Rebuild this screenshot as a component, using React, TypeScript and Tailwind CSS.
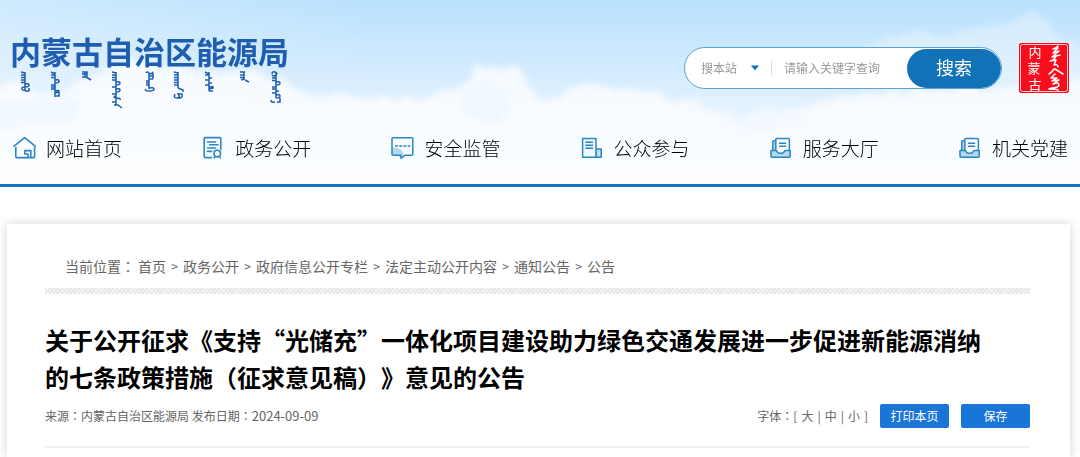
import type { ReactNode } from "react";

interface NavItem {
  label: string;
  icon: ReactNode;
}

const HomeIcon = () => (
  <svg viewBox="0 0 24 24" className="size-6 shrink-0" fill="none" stroke="#2a86c4" strokeWidth="1.6" strokeLinejoin="round" strokeLinecap="round">
    <path d="M2 10.200 12.700 1.600 23.200 10.200" />
    <path d="M3.800 11.500v9.200q0 .9.9.9h17q.9 0 .9-.9v-9.200" />
    <path d="M12.800 18v-3.400h6V21M16 21.200v-3.200h-3.200" />
  </svg>
);

const DocumentIcon = () => (
  <svg viewBox="0 0 24 24" className="size-6 shrink-0" fill="none" stroke="#2a86c4" strokeWidth="1.6" strokeLinecap="round">
    <path d="M10.500 21.600H4.200a1 1 0 0 1-1-1V2.600a1 1 0 0 1 1-1h14.600a1 1 0 0 1 1 1v11" />
    <path d="M6.400 6h8.200M8.600 8.800H17M6.400 12h8.200M6.400 15.400h4.200" />
    <circle cx="16.200" cy="17.600" r="3.300" />
    <path d="m13.800 21-.6.8M18.600 21l.6.8" />
  </svg>
);

const MessageIcon = () => (
  <svg viewBox="0 0 24 24" className="size-6 shrink-0" fill="none" stroke="#2a86c4" strokeWidth="1.5" strokeLinejoin="round">
    <path d="M2 11.500c6 0 10 2 12 6.500l-4 4-2-3H2Z" fill="#b5d8f0" stroke="none" />
    <path d="M3 1.800h18.800a1 1 0 0 1 1 1v15.400a1 1 0 0 1-1 1H15L11 22.400v-3.200H3a1 1 0 0 1-1-1V2.800a1 1 0 0 1 1-1Z" />
    <path d="M5 10H20.400" strokeDasharray="3 1.200" />
  </svg>
);

const PaperIcon = () => (
  <svg viewBox="0 0 24 24" className="size-6 shrink-0" fill="none" stroke="#2a86c4" strokeWidth="1.5" strokeLinejoin="round">
    <path d="M16 13h5.200v8.200H16Z" fill="#c6e1f4" />
    <path d="M2.600 2.600H16v18.600H2.600Z" fill="#eef7fd" />
    <path d="M5.400 6.200h7.600M5.400 9.200h7.600M5.400 12.200h7.600" />
  </svg>
);

const TrayIcon = () => (
  <svg viewBox="0 0 24 24" className="size-6 shrink-0" fill="none" stroke="#2a86c4" strokeWidth="1.5" strokeLinejoin="round">
    <path d="M4 14V6.200a1 1 0 0 1 1-1h1.600v9Z" fill="#b5d8f0" stroke="none" />
    <path d="M2 14.500h4.800c1 0 1.500 2.800 4 2.800h1.600c2.500 0 3-2.800 4-2.800h4.800v5.700a1 1 0 0 1-1 1H3a1 1 0 0 1-1-1Z" fill="#b5d8f0" />
    <path d="M6.800 14.500V3.600a1 1 0 0 1 1-1h11.600a1 1 0 0 1 1 1v10.900" />
    <path d="M6.400 4.800H4.800a1 1 0 0 0-1 1v8.700" />
    <path d="M10 7.200h7.200M10 10.200h7.200" />
  </svg>
);

const navItems: NavItem[] = [
  { label: "网站首页", icon: <HomeIcon /> },
  { label: "政务公开", icon: <DocumentIcon /> },
  { label: "安全监管", icon: <MessageIcon /> },
  { label: "公众参与", icon: <PaperIcon /> },
  { label: "服务大厅", icon: <TrayIcon /> },
  { label: "机关党建", icon: <TrayIcon /> },
];

const crumbs = ["首页", "政务公开", "政府信息公开专栏", "法定主动公开内容", "通知公告", "公告"];

const fontSizes = ["大", "中", "小"];

const Sky = () => (
  <svg className="absolute inset-0 size-full" viewBox="0 0 1080 184" preserveAspectRatio="none" aria-hidden="true">
    <defs>
      <linearGradient id="sky" x1="0" y1="0" x2="0" y2="1">
        <stop offset="0" stopColor="#b9e1fd" />
        <stop offset="0.45" stopColor="#d8edfe" />
        <stop offset="0.8" stopColor="#f6fbff" />
        <stop offset="1" stopColor="#ffffff" />
      </linearGradient>
      <linearGradient id="glow" x1="0" y1="0" x2="1" y2="0">
        <stop offset="0" stopColor="#ffffff" stopOpacity="0.3" />
        <stop offset="0.35" stopColor="#ffffff" stopOpacity="0" />
      </linearGradient>
      <filter id="cloud" x="-10%" y="-30%" width="120%" height="160%">
        <feTurbulence type="fractalNoise" baseFrequency="0.045" numOctaves="4" seed="7" />
        <feDisplacementMap in="SourceGraphic" scale="22" xChannelSelector="R" yChannelSelector="G" />
        <feGaussianBlur stdDeviation="3" />
      </filter>
    </defs>
    <rect width="1080" height="184" fill="url(#sky)" />
    <rect width="1080" height="184" fill="url(#glow)" />
    <g filter="url(#cloud)" fill="#fafdff">
      <path
        d="M-20 92 20 82 60 96 90 76 130 58 160 66 210 70 250 74 290 84 330 98 380 96 420 102 450 88 468 80 478 68 512 66 526 86 546 98 580 86 600 84 650 94 700 108 740 118 800 108 850 98 900 92 1100 80V200H-20Z"
        opacity="0.85"
      />
      <path d="M860 50 900 32 940 34 990 30 1030 12 1050 22 1064 40 1100 50 1100 80 900 80Z" opacity="0.35" />
    </g>
    <g filter="url(#cloud)" fill="#eaf5ff">
      <ellipse cx="485" cy="105" rx="24" ry="20" opacity="0.5" />
      <ellipse cx="30" cy="112" rx="50" ry="14" opacity="0.5" />
      <ellipse cx="760" cy="120" rx="45" ry="12" opacity="0.4" />
    </g>
  </svg>
);

// Vertical script under the bureau name, one column for each word.
const scriptColumns = [
  { x: 21, d: "M0 1l4 1M4 1v19M4 4H0M4 6.500H0M4 9H0M4 11.500H0M4 13q4-1 4 1t-4 2M4 16q-4 0-3 2t3 1M4 20h4v-3" },
  { x: 50, d: "M1 1l4 2M5 1v23M5 4H1M5 6.500H1M5 9q4-1 4 1t-4 2M5 14H1M5 16H1M5 18H1M5 20q4-1 4 0t-4 2M4 25h5v-4" },
  { x: 82, d: "M0 1h5v5M3 1v5M0 3h5M0 6h4M4 6l5 3" },
  { x: 112, d: "M0 1l4 1M4 1v33M4 4H0M4 6.500H0M4 9H0M4 11q4-1 4 1t-4 2M4 16H0M4 18q4-1 4 1t-4 2M4 23H0M4 25q-4 1 0 2M4 27q5 0 4 2M4 31H0M2 34h4l4 3" },
  { x: 146, d: "M0 2q1-2 3 0t4-1M3 2v16M7 2v6M3 5h4M3 8h4M3 10H0M3 12H0M3 14H0M3 17q5-1 5 1t-5 2-3-2" },
  { x: 174, d: "M0 1l4 1M4 1v16M4 4H0M4 6.500H0M4 9H0M4 11.500H0M4 14H0M4 17l5 2v2M1 23q-2 4 2 4t1-4h4q1 4-3 4" },
  { x: 205, d: "M0 1l4 2M4 1v19M4 4H0M4 7h3M4 9H0M4 12h3M4 14H0M4 16q5-1 4 1l-4 1M4 20h4" },
  { x: 240, d: "M0 1h5M4 1v8M4 4H0M4 6.500H0M4 8l-3 1M5 9l4 2" },
  { x: 271, d: "M1 3q0-3 3-2t1 3-4 0M5 2v25M5 7H1M5 9.500H1M5 11q4-1 4 1t-4 2M5 16H1M5 18H1M5 20h3M5 22H1M5 24q4-1 4 1t-4 2M9 27v4H6M0 29q0 3 4 2" },
];

const MongolianScript = () => (
  <svg viewBox="10 0 280 40" className="mt-1 h-10 w-[280px]" fill="none" stroke="#1f5db0" strokeWidth="1.5" role="img" aria-label="内蒙古自治区能源局">
    {scriptColumns.map((column) => (
      <path key={column.x} d={column.d} transform={`translate(${column.x})`} />
    ))}
  </svg>
);

const Seal = () => (
  <svg viewBox="0 0 52 52" className="size-[52px] shrink-0" role="img" aria-label="内蒙古">
    <rect x="1" y="1" width="50" height="50" rx="2" fill="#f90d1d" />
    <rect x="2.500" y="2.500" width="47" height="47" rx="2" fill="none" stroke="#ffc9ce" strokeWidth="1" />
    <g fill="#ffffff" fontSize="13" fontFamily="'Noto Sans CJK SC', sans-serif" textAnchor="middle">
      <text x="17" y="15">内</text>
      <text x="16" y="31">蒙</text>
      <text x="17" y="47">古</text>
    </g>
    <g fill="none" stroke="#ffffff" strokeWidth="1.500" strokeLinecap="round" strokeLinejoin="round">
      <path d="M40 4c-2 2-3 2-5 3l5-1-5 5 6-2-7 6 8-2" />
      <path d="M38 14c-1 3-4 5-6 5l6-1-2 5c2-1 4 0 4 2" />
      <path d="M36 27c-2 3-3 4-5 5M37 27l8 5M37 32l-4 4h6l-5 3 7-1-6 4c4-2 6-1 6 1s-4 3-7 3l-3 1c4 0 7 0 9 1" />
    </g>
  </svg>
);

const SearchBar = () => (
  <form
    className="flex h-[42px] w-[318px] items-stretch overflow-hidden rounded-full border border-[#5ba3d6] bg-white pl-4"
    onSubmit={(event) => event.preventDefault()}
  >
    <div className="relative flex items-center">
      <select aria-label="搜索范围" className="w-[62px] appearance-none bg-transparent text-xs text-[#999999] outline-none">
        <option>搜本站</option>
      </select>
      <svg viewBox="0 0 8 6" className="pointer-events-none absolute right-1 h-[6px] w-2" aria-hidden="true">
        <path d="M0 0.500h8L4 5.500Z" fill="#1673b9" />
      </svg>
    </div>
    <span className="ml-2 h-[14px] w-px self-center bg-[#d8d8d8]" />
    <input
      type="text"
      aria-label="搜索关键字"
      placeholder="请输入关键字查询"
      className="ml-3 min-w-0 flex-1 bg-transparent text-xs text-[#666666] outline-none placeholder:text-[#999999]"
    />
    <button type="submit" className="mt-px w-[94px] rounded-full bg-[#1272b8] pb-1 text-lg leading-6 text-white">
      搜索
    </button>
  </form>
);

// The TC face centres the full-width colon in its cell.
const Colon = () => <span className="font-['Noto_Sans_CJK_TC',sans-serif]">：</span>;

export default function App() {
  return (
    <div className="flex min-h-screen flex-col bg-white font-['Noto_Sans_CJK_SC',sans-serif] [text-spacing-trim:space-all]">
      <header className="relative border-b-3 border-[#1673b9]">
        <Sky />
        <div className="relative flex items-start justify-between px-2.5 pt-[35px]">
          <a href="#home" className="block">
            <h1 className="text-[31px] leading-8 font-bold text-[#1f5db0]">内蒙古自治区能源局</h1>
            <MongolianScript />
          </a>
          <div className="flex items-start gap-4 pt-[7px]">
            <div className="pt-[5px]">
              <SearchBar />
            </div>
            <Seal />
          </div>
        </div>
        <nav className="relative px-3 pt-[23px] pb-[22px]">
          <ul className="flex justify-between">
            {navItems.map((item) => (
              <li key={item.label}>
                <a href="#nav" className="flex items-center gap-2.5 text-[19px] leading-7 font-light text-black">
                  {item.icon}
                  {item.label}
                </a>
              </li>
            ))}
          </ul>
        </nav>
      </header>

      <main className="mt-[37px] mr-2.5 ml-[7px] flex-1 bg-white pr-10 pl-[38px] shadow-[0_0_10px_rgba(0,0,0,0.18)]">
        <nav aria-label="当前位置" className="flex items-center pt-8 pl-5 text-sm leading-5 text-[#666666]">
          <span className="mr-[3px]">
            当前位置
            <Colon />
          </span>
          {crumbs.map((crumb, index) => (
            <span key={crumb} className="flex">
              {index > 0 && <span className="w-[17px] text-center text-xs leading-5">&gt;</span>}
              <a href="#crumb">{crumb}</a>
            </span>
          ))}
        </nav>
        <div className="mt-3 h-[6px] bg-[repeating-linear-gradient(135deg,#e4e4e4_0px,#e4e4e4_1px,#f6f6f6_2px,#f6f6f6_3px)]" />

        <h2 className="mt-[27px] pr-10 text-2xl leading-[37px] font-bold text-black">
          关于公开征求《支持“光储充”一体化项目建设助力绿色交通发展进一步促进新能源消纳的七条政策措施（征求意见稿）》意见的公告
        </h2>

        <div className="flex items-center justify-between border-b-2 border-[#f2f2f2] pt-[9px] pb-[18px] text-xs text-[#666666]">
          <p>
            来源
            <Colon />
            内蒙古自治区能源局 发布日期
            <Colon />
            <span className="text-[13px]">2024-09-09</span>
          </p>
          <div className="flex items-center">
            <div className="mr-3 flex items-center gap-1">
              <span>
                字体
                <Colon />[
              </span>
              {fontSizes.map((size, index) => (
                <span key={size} className="flex gap-1">
                  {index > 0 && <span>|</span>}
                  <button type="button">{size}</button>
                </span>
              ))}
              <span>]</span>
            </div>
            <button type="button" className="mr-3 h-6 w-[69px] rounded-xs bg-[#1a75d8] text-white">
              打印本页
            </button>
            <button type="button" className="h-6 w-[69px] rounded-xs bg-[#1a75d8] text-white">
              保存
            </button>
          </div>
        </div>
      </main>
    </div>
  );
}
